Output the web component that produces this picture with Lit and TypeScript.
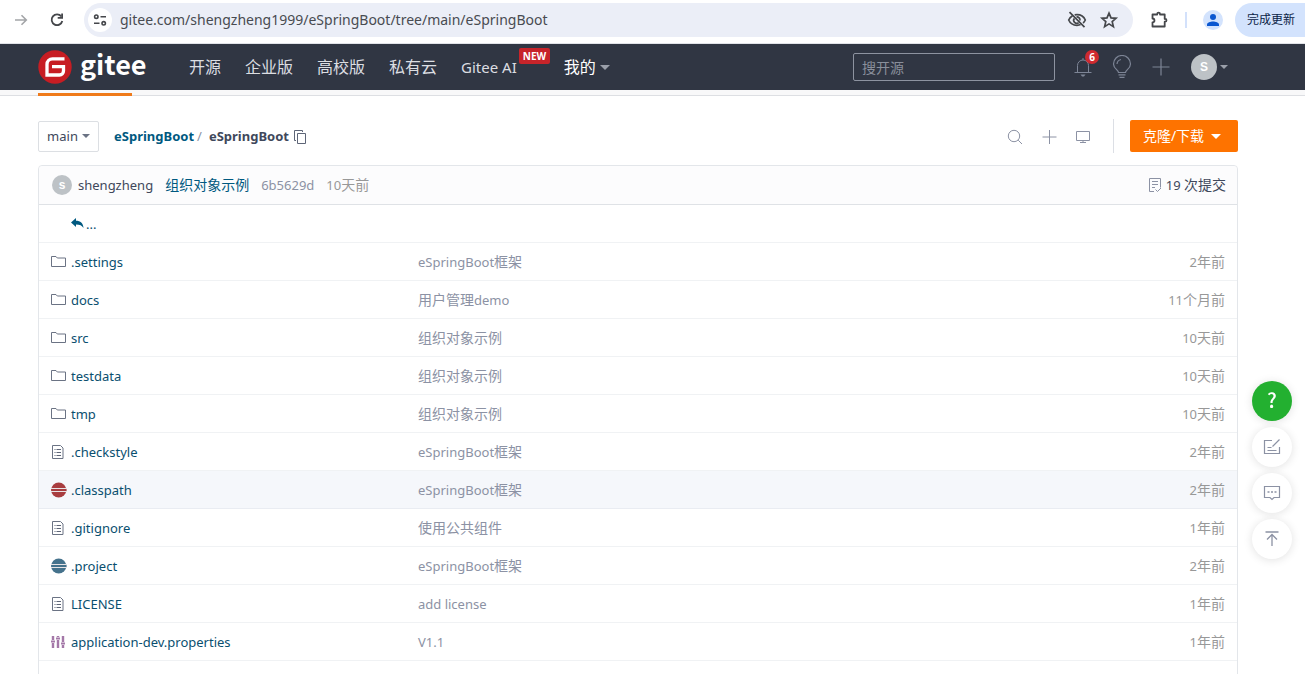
import { LitElement, html, css, svg } from "lit";
import { customElement } from "lit/decorators.js";
import { classMap } from "lit/directives/class-map.js";

type Kind = "folder" | "file" | "eclipse-red" | "eclipse-blue" | "props";

interface Entry {
  kind: Kind;
  name: string;
  message: string;
  age: string;
  active?: boolean;
}

const entries: Entry[] = [
  { kind: "folder", name: ".settings", message: "eSpringBoot框架", age: "2年前" },
  { kind: "folder", name: "docs", message: "用户管理demo", age: "11个月前" },
  { kind: "folder", name: "src", message: "组织对象示例", age: "10天前" },
  { kind: "folder", name: "testdata", message: "组织对象示例", age: "10天前" },
  { kind: "folder", name: "tmp", message: "组织对象示例", age: "10天前" },
  { kind: "file", name: ".checkstyle", message: "eSpringBoot框架", age: "2年前" },
  { kind: "eclipse-red", name: ".classpath", message: "eSpringBoot框架", age: "2年前", active: true },
  { kind: "file", name: ".gitignore", message: "使用公共组件", age: "1年前" },
  { kind: "eclipse-blue", name: ".project", message: "eSpringBoot框架", age: "2年前" },
  { kind: "file", name: "LICENSE", message: "add license", age: "1年前" },
  { kind: "props", name: "application-dev.properties", message: "V1.1", age: "1年前" },
  { kind: "props", name: "", message: "", age: "" },
];

// Han characters are set one pixel larger than the Latin text around them.
const mixed = (text: string) =>
  text
    .split(/([\u4e00-\u9fff]+)/)
    .filter((run) => run)
    .map((run) => (/[\u4e00-\u9fff]/.test(run) ? html`<span class="cjk">${run}</span>` : run));

const icon = (w: number, h: number, body: unknown) =>
  html`<svg class="icon" width=${w} height=${h} viewBox="0 0 ${w} ${h}" aria-hidden="true">${body}</svg>`;

const eclipse = (fill: string) => svg`
  <circle cx="7.700" cy="8" r="7.600" fill=${fill}/>
  <path d="M0 6.500h16M0 9.500h16" stroke="#e8e4e6"/>
  <path d="M0 8h16" stroke=${fill} stroke-width="2" opacity=".5"/>`;

const kindIcon = (kind: Kind) => {
  switch (kind) {
    case "folder":
      return icon(16, 16, svg`<path d="M.5 12.500v-10h4.500l1.300 1.500h8.200v8.500z" fill="none" stroke="#6b7384"/>`);
    case "file":
      return icon(16, 16, svg`
        <path d="M1.500 1.500h8l2.500 2.500v10.500h-10.500z" fill="none" stroke="#6b7384"/>
        <path d="M3.500 5.500h1M5.500 5.500h4.500M3.500 8.500h1M5.500 8.500h4.500M3.500 11.500h1M5.500 11.500h4.500" stroke="#5d6577"/>`);
    case "eclipse-red":
      return icon(16, 16, eclipse("#a83c3f"));
    case "eclipse-blue":
      return icon(16, 16, eclipse("#45728c"));
    case "props":
      return icon(16, 16, svg`
        <path d="M2 2v4M2 9v5M7 2v1M7 6v8M12 2v6M12 11v3" stroke="#a478a8" stroke-width="2.400"/>
        <path d="M0 7.500h4M5 4.500h4M10 9.500h4" stroke="#a478a8" stroke-width="2"/>`);
  }
};

@customElement("app-root")
export class AppRoot extends LitElement {
  static styles = css`
    :host {
      display: block;
      height: 100vh;
      overflow: hidden;
      background: #fff;
      color: #40485b;
      font: 13px/20px "Noto Sans", "Noto Sans CJK SC", sans-serif;
    }
    * { box-sizing: border-box; }
    a { color: inherit; text-decoration: none; }
    button {
      margin: 0;
      padding: 0;
      border: 0;
      background: none;
      color: inherit;
      font: inherit;
      display: flex;
      align-items: center;
      justify-content: center;
      flex: none;
    }
    .icon { display: block; flex: none; }
    .cjk { font-size: 14px; line-height: 18px; }
    .caret {
      border: 4px solid transparent;
      border-top: 4px solid currentColor;
      border-bottom: 0;
    }
    .caret.big { border-width: 5px 5px 0; }

    .browser {
      height: 44px;
      padding: 0 0 4px 12px;
      display: flex;
      align-items: center;
      border-bottom: 1px solid #e1e3e8;
      color: #45474b;
    }
    .reload { margin: 0 18px; }
    .address {
      flex: 1;
      height: 34px;
      padding: 0 14px 0 4px;
      display: flex;
      align-items: center;
      border-radius: 17px;
      background: #ebeef7;
    }
    .site { width: 24px; height: 24px; border-radius: 50%; background: #fff; }
    .url {
      flex: 1;
      min-width: 0;
      padding: 0 0 0 8px;
      border: 0;
      outline: 0;
      background: none;
      color: #484b51;
      font: 14px/20px "Noto Sans", sans-serif;
    }
    .address .star { margin-left: 12px; }
    .puzzle { margin: 0 16px 0 16px; }
    .split { width: 2px; height: 16px; background: #d3e1fb; }
    .profile { width: 20px; height: 20px; margin: 0 12px 0 16px; border-radius: 50%; background: #d3e3fd; }
    .update {
      width: 70px;
      height: 34px;
      padding-left: 2px;
      border-radius: 17px 0 0 17px;
      background: #d3e3fd;
      color: #0c2347;
      font-size: 12px;
    }

    .top {
      height: 46px;
      padding: 0 77px 0 38px;
      display: flex;
      align-items: center;
      background: #303643;
      color: #dcdee2;
    }
    .logo { display: flex; align-items: center; gap: 8px; width: 151px; }
    .word {
      color: #fff;
      font: bold 27px/36px "Noto Sans CJK SC", sans-serif;
      padding-bottom: 6px;
    }
    .menu { display: flex; align-items: center; gap: 24px; font-size: 16px; line-height: 24px; }
    .latin { position: relative; margin-right: 23px; font-size: 15px; }
    .new {
      position: absolute;
      left: 100%;
      top: -7px;
      margin-left: 2px;
      padding: 0 4px;
      border-radius: 2px;
      background: #c7242a;
      color: #fff;
      font: bold 10px/16px "Open Sans", sans-serif;
    }
    .mine { display: flex; align-items: center; gap: 4px; color: #fff; }
    .mine .caret, .user .caret { color: #9a9fa9; }
    .search {
      width: 202px;
      height: 28px;
      margin-left: auto;
      padding: 0 8px;
      border: 1px solid #8d93a0;
      border-radius: 2px;
      background: none;
      color: #fff;
      font: inherit;
      font-size: 14px;
    }
    .search::placeholder { color: #898f9b; }
    .bell { position: relative; margin: 0 19px 0 18px; }
    .count {
      position: absolute;
      right: -6px;
      top: -5px;
      width: 14px;
      height: 14px;
      border-radius: 50%;
      background: #cf2a30;
      color: #fff;
      font: bold 10px/14px "Open Sans", sans-serif;
      text-align: center;
    }
    .plus { margin: 0 21px 0 20px; }
    .user { gap: 3px; }
    .face {
      width: 26px;
      height: 26px;
      border-radius: 50%;
      background: #bdc2c6;
      color: #fff;
      font: bold 12px/26px "Liberation Sans", sans-serif;
      text-align: center;
      flex: none;
    }
    .face.small { width: 20px; height: 20px; line-height: 20px; }

    .strip { height: 6px; padding: 3px 38px 0; background: #f8f8f9; border-bottom: 1px solid #dddfe3; }
    .tab { width: 94px; height: 3px; background: #ef7a1a; }

    .page { padding: 24px 67px 0 38px; }
    .bar { display: flex; align-items: center; height: 32px; margin-bottom: 13px; }
    .branch { width: 61px; height: 31px; gap: 4px; border: 1px solid #dcdfe3; border-radius: 2px; }
    .branch .caret { color: #6b7384; }
    .crumbs { display: flex; align-items: center; margin-left: 15px; font-weight: bold; }
    .crumbs a { color: #005980; }
    .sep { padding: 0 7px 0 3px; color: #8c92a4; font-weight: normal; }
    .copy { margin-left: 4px; padding-top: 2px; }
    .tools { display: flex; align-items: center; margin-left: auto; padding-top: 2px; gap: 18px; }
    .rule { width: 1px; height: 34px; margin: 0 16px 0 22px; background: #dcdfe5; }
    .clone {
      width: 108px;
      height: 32px;
      gap: 7px;
      padding-right: 4px;
      border-radius: 2px;
      background: #fe7300;
      color: #fff;
      font-size: 14px;
    }

    .box { border: 1px solid #e3e6ea; border-radius: 4px 4px 0 0; }
    .commit {
      height: 39px;
      padding: 0 11px 0 13px;
      display: flex;
      align-items: center;
      gap: 12px;
      background: #fcfcfd;
      border-bottom: 1px solid #dfe2e6;
      border-radius: 4px 4px 0 0;
    }
    .author { display: flex; align-items: center; gap: 6px; }
    .subject { color: #005980; }
    .muted { color: #8c92a4; }
    .grey { color: #989898; }
    .total { display: flex; align-items: center; gap: 4px; margin-left: auto; }

    .files { width: 100%; border-collapse: separate; border-spacing: 0; table-layout: fixed; }
    .files td { height: 38px; padding: 0 12px; border-bottom: 1px solid #f0f2f4; vertical-align: middle; }
    .files .c1 { width: 367px; }
    .files .c3 { width: 160px; text-align: right; }
    .files .active td { background: #f5f7fb; border-color: #e9ecf2; }
    .name { display: flex; align-items: center; gap: 4px; color: #0a4f6f; }
    .up { padding-left: 20px; gap: 2px; }

    .dock { position: fixed; right: 13px; top: 381px; display: grid; gap: 6px; }
    .round {
      width: 40px;
      height: 40px;
      border-radius: 50%;
      background: #fff;
      box-shadow: 0 1px 10px rgba(0, 0, 0, 0.12);
    }
    .help { background: #23b030; color: #fff; font: 500 20px/36px "Noto Sans CJK SC", sans-serif; padding-bottom: 2px; }
  `;

  private browserBar() {
    return html`
      <div class="browser">
        <button aria-label="前进">${icon(18, 18, svg`<path d="M3 9h11M9.500 4.200 14.300 9 9.500 13.800" fill="none" stroke="#a3a5a8" stroke-width="1.600"/>`)}</button>
        <button class="reload" aria-label="刷新">${icon(18, 18, svg`<path d="M13.300 5.400A5.400 5.400 0 1 0 14.300 10" fill="none" stroke="#45474b" stroke-width="1.800"/><path d="M15 2.500v5.300H9.700V6h3.500V2.500z" fill="#45474b"/>`)}</button>
        <div class="address">
          <button class="site" aria-label="网站信息">${icon(16, 16, svg`<g fill="none" stroke="#45474b" stroke-width="1.600"><circle cx="4.300" cy="4.700" r="1.700"/><path d="M8.500 4.700h5.500M2 11.300h5.500"/><circle cx="11.700" cy="11.300" r="1.700"/></g>`)}</button>
          <input class="url" aria-label="地址" value="gitee.com/shengzheng1999/eSpringBoot/tree/main/eSpringBoot" />
          <button aria-label="已阻止">${icon(20, 20, svg`<g fill="none" stroke="#45474b" stroke-width="1.700"><path d="M5.500 5.800C3.600 6.900 2.300 8.600 1.700 10c1.300 3 4.400 5.300 8.300 5.300 1.300 0 2.500-.2 3.600-.7M7.700 4.900C8.400 4.700 9.200 4.600 10 4.600c3.900 0 7 2.300 8.300 5.400-.5 1.100-1.200 2.100-2.200 3"/><path d="M7.300 8.500a3 3 0 0 0 4.200 4.200M9.500 7a3.100 3.100 0 0 1 3.500 3.500M2.500 2.200l15 15"/></g>`)}</button>
          <button class="star" aria-label="收藏">${icon(20, 20, svg`<path d="m10 3.200 2 4.700 5 .4-3.800 3.300 1.200 5-4.400-2.700-4.400 2.700 1.200-5L3 8.300l5-.4z" fill="none" stroke="#45474b" stroke-width="1.700"/>`)}</button>
        </div>
        <button class="puzzle" aria-label="扩展程序">${icon(20, 20, svg`<path d="M3.500 4.500h4.700V4a1.400 1.400 0 0 1 2.800 0v.5h4.700v4.400h.4a1.400 1.400 0 0 1 0 2.800h-.4v4.800H3.500v-4.200c2.600-.2 2.600-3.600 0-3.800z" fill="none" stroke="#45474b" stroke-width="1.800" stroke-linejoin="round"/>`)}</button>
        <span class="split"></span>
        <button class="profile" aria-label="个人资料">${icon(14, 14, svg`<circle cx="7" cy="4" r="3" fill="#0b57d0"/><path d="M1 13v-1.500C1 9.500 4.500 8.500 7 8.500s6 1 6 3V13z" fill="#0b57d0"/>`)}</button>
        <button class="update">完成更新</button>
      </div>`;
  }

  private topNav() {
    return html`
      <header class="top">
        <a class="logo" href="#">
          ${icon(34, 34, svg`<circle cx="17" cy="17" r="16.700" fill="#c71d23"/><path d="M26.500 8.900H14.500a5.500 5.500 0 0 0-5.500 5.500V25H21.500a4 4 0 0 0 4-4V16.700H14" fill="none" stroke="#fff" stroke-width="3.300"/>`)}
          <span class="word">gitee</span>
        </a>
        <nav class="menu">
          <a href="#">开源</a><a href="#">企业版</a><a href="#">高校版</a><a href="#">私有云</a>
          <a class="latin" href="#">Gitee AI<span class="new">NEW</span></a>
          <a class="mine" href="#">我的<i class="caret big"></i></a>
        </nav>
        <input class="search" type="search" aria-label="搜开源" placeholder="搜开源" />
        <button class="bell" aria-label="通知">${icon(20, 24, svg`<g fill="none" stroke="#7d8596"><path d="M4.500 17.500v-7a5.500 5.500 0 0 1 11 0v7M1.500 17.500h17M10 5V3"/></g><path d="M7.500 19.500h5l-1.500 2h-2z" fill="#7d8596"/>`)}<span class="count">6</span></button>
        <button aria-label="动态">${icon(20, 24, svg`<g fill="none" stroke="#7d8596" stroke-width="1.200"><path d="M6.500 17.500c0-2.500-5-3.700-5-8.500a8.500 8.500 0 0 1 17 0c0 4.800-5 6-5 8.500zM6.500 19.800h7M7.500 22.300h5M5 9a5 5 0 0 1 4-4.500"/></g>`)}</button>
        <button class="plus" aria-label="新建">${icon(18, 18, svg`<path d="M9 .5v17M.5 9h17" stroke="#7d8596" stroke-width="1.200"/>`)}</button>
        <button class="user" aria-label="账户"><span class="face">S</span><i class="caret"></i></button>
      </header>
      <div class="strip"><div class="tab"></div></div>`;
  }

  private toolbar() {
    return html`
      <div class="bar">
        <button class="branch">main<i class="caret"></i></button>
        <div class="crumbs">
          <a href="#">eSpringBoot</a><span class="sep">/</span><span>eSpringBoot</span>
          <button class="copy" aria-label="复制路径">${icon(14, 16, svg`<g fill="none" stroke="#5d6577"><path d="M4.500 4.500h8v10h-8z"/><path d="M3 11.500H1.500v-10h8V3"/></g>`)}</button>
        </div>
        <div class="tools">
          <button aria-label="搜索">${icon(16, 16, svg`<g fill="none" stroke="#8c92a4"><circle cx="7" cy="7" r="5.700"/><path d="m11.200 11.200 3.800 3.800"/></g>`)}</button>
          <button aria-label="添加">${icon(16, 16, svg`<path d="M8.500 1v14M1.500 8h14" stroke="#8c92a4"/>`)}</button>
          <button aria-label="Web IDE">${icon(16, 16, svg`<path d="M1.500 2.500h13v9h-13zM8 11.500v2M5 13.500h6" fill="none" stroke="#8c92a4"/>`)}</button>
        </div>
        <span class="rule"></span>
        <button class="clone">克隆/下载<i class="caret big"></i></button>
      </div>`;
  }

  private fileBox() {
    return html`
      <section class="box">
        <div class="commit">
          <a class="author" href="#"><span class="face small">s</span>shengzheng</a>
          <a class="subject" href="#">${mixed("组织对象示例")}</a>
          <a class="muted" href="#">6b5629d</a>
          <span class="grey">${mixed("10天前")}</span>
          <a class="total" href="#">
            ${icon(14, 16, svg`<g fill="none" stroke="#8c92a4"><path d="M6 14.500H1.500v-13h11v9M4 4.500h6M4 7.500h6M4 10.500h3M7.500 12.500l2 2 3.500-3.500"/></g>`)}<span>${mixed("19 次提交")}</span>
          </a>
        </div>
        <table class="files">
          <tbody>
            <tr>
              <td class="c1"><a class="name up" href="#">${icon(13, 16, svg`<path d="M0 6.500 5 2v2.700c4.500 0 7 2 7.500 7.300C11 9.500 9 8.500 5 8.500V11z" fill="#005980"/>`)}...</a></td>
              <td></td>
              <td class="c3"></td>
            </tr>
            ${entries.map(
              (e) => html`<tr class=${classMap({ active: !!e.active })}>
                <td class="c1"><a class="name" href="#">${kindIcon(e.kind)}${e.name}</a></td>
                <td class="muted">${mixed(e.message)}</td>
                <td class="c3 grey">${mixed(e.age)}</td>
              </tr>`
            )}
          </tbody>
        </table>
      </section>`;
  }

  private dock() {
    return html`
      <aside class="dock">
        <button class="round help" aria-label="帮助">?</button>
        <button class="round" aria-label="反馈">${icon(18, 18, svg`<g fill="none" stroke="#8c92a4" stroke-width="1.200"><path d="M9 2.500H1.500v13h15V9M4.500 12.500h9M4.500 9.500h4M9.500 8.500l7-7"/></g>`)}</button>
        <button class="round" aria-label="评论">${icon(18, 18, svg`<path d="M1.500 2.500h15v11H11l-2 2-2-2H1.500z" fill="none" stroke="#8c92a4" stroke-width="1.200"/><path d="M4.500 7.200h2v1.600h-2zM8 7.200h2v1.600H8zM11.500 7.200h2v1.600h-2z" fill="#8c92a4"/>`)}</button>
        <button class="round" aria-label="返回顶部">${icon(18, 18, svg`<path d="M2.500 2h13M9 16V4.500M4 9.500l5-5 5 5" fill="none" stroke="#8c92a4" stroke-width="1.300"/>`)}</button>
      </aside>`;
  }

  render() {
    return html`
      ${this.browserBar()} ${this.topNav()}
      <main class="page">${this.toolbar()} ${this.fileBox()}</main>
      ${this.dock()}
    `;
  }
}
